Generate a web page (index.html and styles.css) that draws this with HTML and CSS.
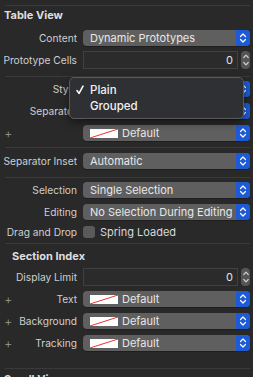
FILE: index.html
```html
<html lang="en">
<head>
    <meta charset="UTF-8">
    <title>Inspector</title>
    <link rel="stylesheet" href="styles.css">
</head>
<body>
    <div id="inspector">
        <div class="rule"></div>

        <!-- Table View -->
        <div class="group g1">
            <h3>Table View</h3>
            <div class="row">
                <label>Content</label>
                <div class="popup"><span class="val">Dynamic Prototypes</span><span class="arrows"><svg viewBox="0 0 8 12"><path d="M1.5 4.5 4 2l2.5 2.5M1.5 7.5 4 10l2.5-2.5"/></svg></span></div>
            </div>
            <div class="row">
                <label>Prototype Cells</label>
                <div class="numfield"><div class="field">0</div><div class="stepper"><svg viewBox="0 0 8 16"><path d="M1.8 5.5 4 3.2l2.2 2.3M1.8 10.5 4 12.8l2.2-2.3"/></svg></div></div>
            </div>
        </div>
        <div class="rule"></div>

        <div class="group g2">
            <div class="row">
                <label>Style</label>
                <div class="popup"><span class="val">Plain</span><span class="arrows"><svg viewBox="0 0 8 12"><path d="M1.5 4.5 4 2l2.5 2.5M1.5 7.5 4 10l2.5-2.5"/></svg></span></div>
            </div>
            <div class="row">
                <label>Separator</label>
                <div class="popup"><span class="val">Default</span><span class="arrows"><svg viewBox="0 0 8 12"><path d="M1.5 4.5 4 2l2.5 2.5M1.5 7.5 4 10l2.5-2.5"/></svg></span></div>
            </div>
            <div class="row">
                <label><span class="plus">+</span></label>
                <div class="popup"><span class="val"><svg class="swatch" viewBox="0 0 28 9"><rect width="28" height="9" fill="#fff"/><line x1="0" y1="9" x2="28" y2="0" stroke="#e8352c" stroke-width="1"/></svg>Default</span><span class="arrows"><svg viewBox="0 0 8 12"><path d="M1.5 4.5 4 2l2.5 2.5M1.5 7.5 4 10l2.5-2.5"/></svg></span></div>
            </div>

            <div class="menu">
                <div class="item"><span class="check"><svg viewBox="0 0 8 10"><path d="M1 5.6 3 8.4 7 1.2"/></svg></span>Plain</div>
                <div class="item"><span class="check"></span>Grouped</div>
            </div>
        </div>
        <div class="rule"></div>

        <div class="group g3">
            <div class="row">
                <label>Separator Inset</label>
                <div class="popup"><span class="val">Automatic</span><span class="arrows"><svg viewBox="0 0 8 12"><path d="M1.5 4.5 4 2l2.5 2.5M1.5 7.5 4 10l2.5-2.5"/></svg></span></div>
            </div>
        </div>
        <div class="rule"></div>

        <div class="group g4">
            <div class="row">
                <label>Selection</label>
                <div class="popup"><span class="val">Single Selection</span><span class="arrows"><svg viewBox="0 0 8 12"><path d="M1.5 4.5 4 2l2.5 2.5M1.5 7.5 4 10l2.5-2.5"/></svg></span></div>
            </div>
            <div class="row">
                <label>Editing</label>
                <div class="popup"><span class="val">No Selection During Editing</span><span class="arrows"><svg viewBox="0 0 8 12"><path d="M1.5 4.5 4 2l2.5 2.5M1.5 7.5 4 10l2.5-2.5"/></svg></span></div>
            </div>
            <div class="row short">
                <label>Drag and Drop</label>
                <div class="checkrow"><span class="box"></span>Spring Loaded</div>
            </div>
        </div>
        <div class="rule"></div>

        <!-- Section Index -->
        <div class="group g5">
            <h3 class="sub">Section Index</h3>
            <div class="row">
                <label>Display Limit</label>
                <div class="numfield"><div class="field">0</div><div class="stepper"><svg viewBox="0 0 8 16"><path d="M1.8 5.5 4 3.2l2.2 2.3M1.8 10.5 4 12.8l2.2-2.3"/></svg></div></div>
            </div>
            <div class="row">
                <label><span class="plus">+</span>Text</label>
                <div class="popup"><span class="val"><svg class="swatch" viewBox="0 0 28 9"><rect width="28" height="9" fill="#fff"/><line x1="0" y1="9" x2="28" y2="0" stroke="#e8352c" stroke-width="1"/></svg>Default</span><span class="arrows"><svg viewBox="0 0 8 12"><path d="M1.5 4.5 4 2l2.5 2.5M1.5 7.5 4 10l2.5-2.5"/></svg></span></div>
            </div>
            <div class="row">
                <label><span class="plus">+</span>Background</label>
                <div class="popup"><span class="val"><svg class="swatch" viewBox="0 0 28 9"><rect width="28" height="9" fill="#fff"/><line x1="0" y1="9" x2="28" y2="0" stroke="#e8352c" stroke-width="1"/></svg>Default</span><span class="arrows"><svg viewBox="0 0 8 12"><path d="M1.5 4.5 4 2l2.5 2.5M1.5 7.5 4 10l2.5-2.5"/></svg></span></div>
            </div>
            <div class="row">
                <label><span class="plus">+</span>Tracking</label>
                <div class="popup"><span class="val"><svg class="swatch" viewBox="0 0 28 9"><rect width="28" height="9" fill="#fff"/><line x1="0" y1="9" x2="28" y2="0" stroke="#e8352c" stroke-width="1"/></svg>Default</span><span class="arrows"><svg viewBox="0 0 8 12"><path d="M1.5 4.5 4 2l2.5 2.5M1.5 7.5 4 10l2.5-2.5"/></svg></span></div>
            </div>
        </div>
        <div class="rule"></div>
        <h3 class="next">Scroll View</h3>
    </div>
</body>
</html>
```

FILE: styles.css
```css
* {
    box-sizing: border-box;
}

body {
    margin: 0;
    background: #292929;
    overflow: hidden;
    font-family: 'Inter', 'Liberation Sans', sans-serif;
    font-size: 11px;
    color: #d8d8d8;
}

#inspector {
    width: 253px;
    height: 377px;
    overflow: hidden;
    padding-top: 5px;
}

.rule {
    height: 1px;
    margin: 0 3px 0 5px;
    background: #3a3a3a;
}

.group {
    position: relative;
}

.g1 { padding: 3px 0 5px; }
.g2 { padding: 1px 0 3px; }
.g3 { padding: 2px 0 5px; }
.g4 { padding: 1px 0 2px; }
.g5 { padding: 6px 0 14px; }

h3 {
    margin: 0 0 6px 4px;
    font-size: 11px;
    font-weight: 700;
    color: #dedede;
    line-height: 12px;
    white-space: nowrap;
}

h3.sub {
    margin: 0 0 4px 12px;
}

.row {
    display: grid;
    grid-template-columns: 77px 167px;
    column-gap: 6px;
    align-items: center;
    height: 22px;
}

.row label {
    display: flex;
    justify-content: flex-end;
    align-items: center;
    white-space: nowrap;
    color: #cfcfcf;
    font-size: 10.2px;
}

.plus {
    margin-right: auto;
    margin-left: 4px;
    color: #9a9a9a;
    font-size: 13px;
    font-weight: 300;
}

.popup {
    display: flex;
    height: 16px;
    border-radius: 4px;
    overflow: hidden;
    background: #5f5f5f;
    box-shadow: 0 1px 0 rgba(0, 0, 0, 0.25);
}

.popup .val {
    flex: 1;
    display: flex;
    align-items: center;
    padding-left: 7px;
    color: #e8e8e8;
    white-space: nowrap;
    overflow: hidden;
}

.popup .arrows {
    width: 14px;
    background: #1d5bd6;
    display: flex;
    align-items: center;
    justify-content: center;
}

.arrows svg {
    width: 8px;
    height: 12px;
}

svg path {
    fill: none;
    stroke: #fff;
    stroke-width: 1.2;
    stroke-linecap: round;
    stroke-linejoin: round;
}

.swatch {
    width: 28px;
    height: 9px;
    margin-right: 4px;
}

.numfield {
    display: flex;
    align-items: center;
    gap: 3px;
    height: 18px;
}

.field {
    flex: 1;
    height: 18px;
    border: 1px solid #404040;
    background: #2b2b2b;
    text-align: right;
    padding-right: 4px;
    line-height: 16px;
    color: #e2e2e2;
}

.stepper {
    width: 9px;
    height: 18px;
    border-radius: 4px;
    background: #555;
    display: flex;
    align-items: center;
    justify-content: center;
}

.stepper svg {
    width: 8px;
    height: 16px;
}

.stepper svg path {
    stroke: #cfcfcf;
}

.row.short {
    height: 18px;
}

.checkrow {
    display: flex;
    align-items: center;
    color: #d8d8d8;
}

.box {
    width: 12px;
    height: 12px;
    border-radius: 3px;
    background: #5a5a5a;
    margin-right: 5px;
}

.menu {
    position: absolute;
    left: 69px;
    top: 0;
    width: 175px;
    height: 42px;
    padding: 4px 0;
    border: 1px solid #5a5a5c;
    border-radius: 5px;
    background: #2e3033;
    box-shadow: 0 3px 8px rgba(0, 0, 0, 0.5);
}

.menu .item {
    display: flex;
    align-items: center;
    height: 16px;
    font-size: 11.5px;
    font-weight: 500;
    color: #f0f0f0;
}

.menu .check {
    width: 20px;
    padding-left: 6px;
    display: flex;
    align-items: center;
}

.menu .check svg {
    width: 8px;
    height: 10px;
}

.menu .check path {
    stroke-width: 1.6;
}

h3.next {
    margin: 4px 0 0 4px;
}
```
